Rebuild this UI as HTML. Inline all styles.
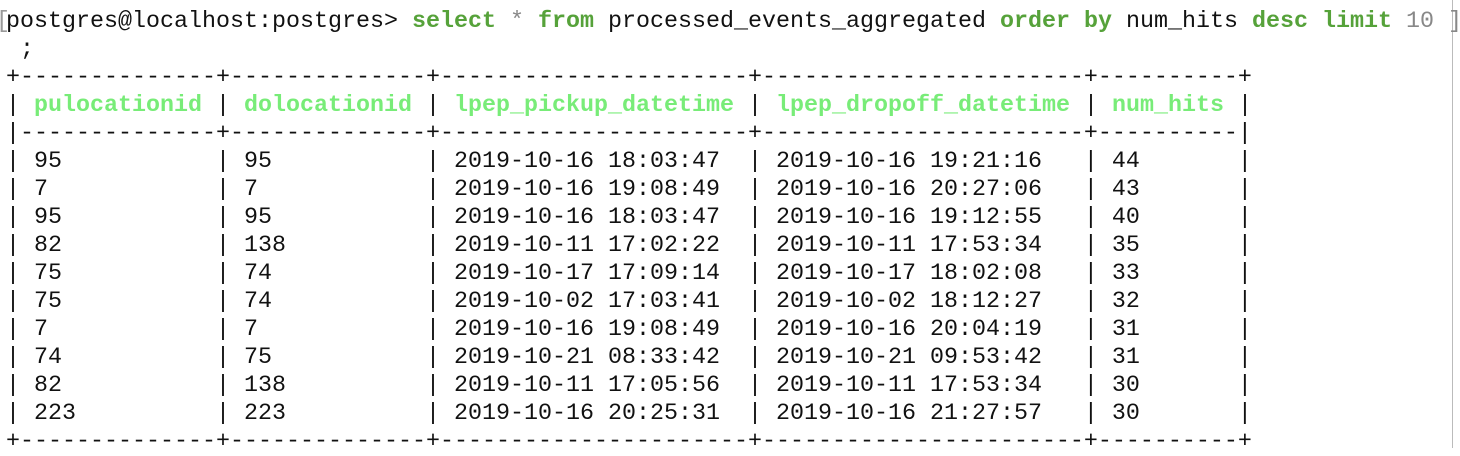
<!DOCTYPE html>
<html><head><meta charset="utf-8"><style>
html,body{margin:0;padding:0;background:#fff;width:1460px;height:448px;overflow:hidden}
pre{margin:0;position:absolute;left:6px;top:8px;font-family:"Liberation Mono",monospace;font-size:23.33px;line-height:28px;color:#111;white-space:pre}
.k{color:#56a23a;font-weight:bold}
.h{color:#78ec78;font-weight:bold}
.g{color:#888}
#br{position:absolute;left:-4px;top:8px;font-family:"Liberation Mono",monospace;font-size:23.33px;line-height:28px;color:#999}
#vl{position:absolute;left:1452px;top:0;width:1px;height:448px;background:#bbb}
</style></head><body>
<div id="br">[</div>
<div id="vl"></div>
<pre>postgres@localhost:postgres&gt; <span class="k">select</span> <span class="g">*</span> <span class="k">from</span> processed_events_aggregated <span class="k">order by</span> num_hits <span class="k">desc limit</span> <span class="g">10 ]</span>
 ;
+--------------+--------------+----------------------+-----------------------+----------+
| <span class="h">pulocationid</span> | <span class="h">dolocationid</span> | <span class="h">lpep_pickup_datetime</span> | <span class="h">lpep_dropoff_datetime</span> | <span class="h">num_hits</span> |
|--------------+--------------+----------------------+-----------------------+----------|
| 95           | 95           | 2019-10-16 18:03:47  | 2019-10-16 19:21:16   | 44       |
| 7            | 7            | 2019-10-16 19:08:49  | 2019-10-16 20:27:06   | 43       |
| 95           | 95           | 2019-10-16 18:03:47  | 2019-10-16 19:12:55   | 40       |
| 82           | 138          | 2019-10-11 17:02:22  | 2019-10-11 17:53:34   | 35       |
| 75           | 74           | 2019-10-17 17:09:14  | 2019-10-17 18:02:08   | 33       |
| 75           | 74           | 2019-10-02 17:03:41  | 2019-10-02 18:12:27   | 32       |
| 7            | 7            | 2019-10-16 19:08:49  | 2019-10-16 20:04:19   | 31       |
| 74           | 75           | 2019-10-21 08:33:42  | 2019-10-21 09:53:42   | 31       |
| 82           | 138          | 2019-10-11 17:05:56  | 2019-10-11 17:53:34   | 30       |
| 223          | 223          | 2019-10-16 20:25:31  | 2019-10-16 21:27:57   | 30       |
+--------------+--------------+----------------------+-----------------------+----------+</pre>
</body></html>
